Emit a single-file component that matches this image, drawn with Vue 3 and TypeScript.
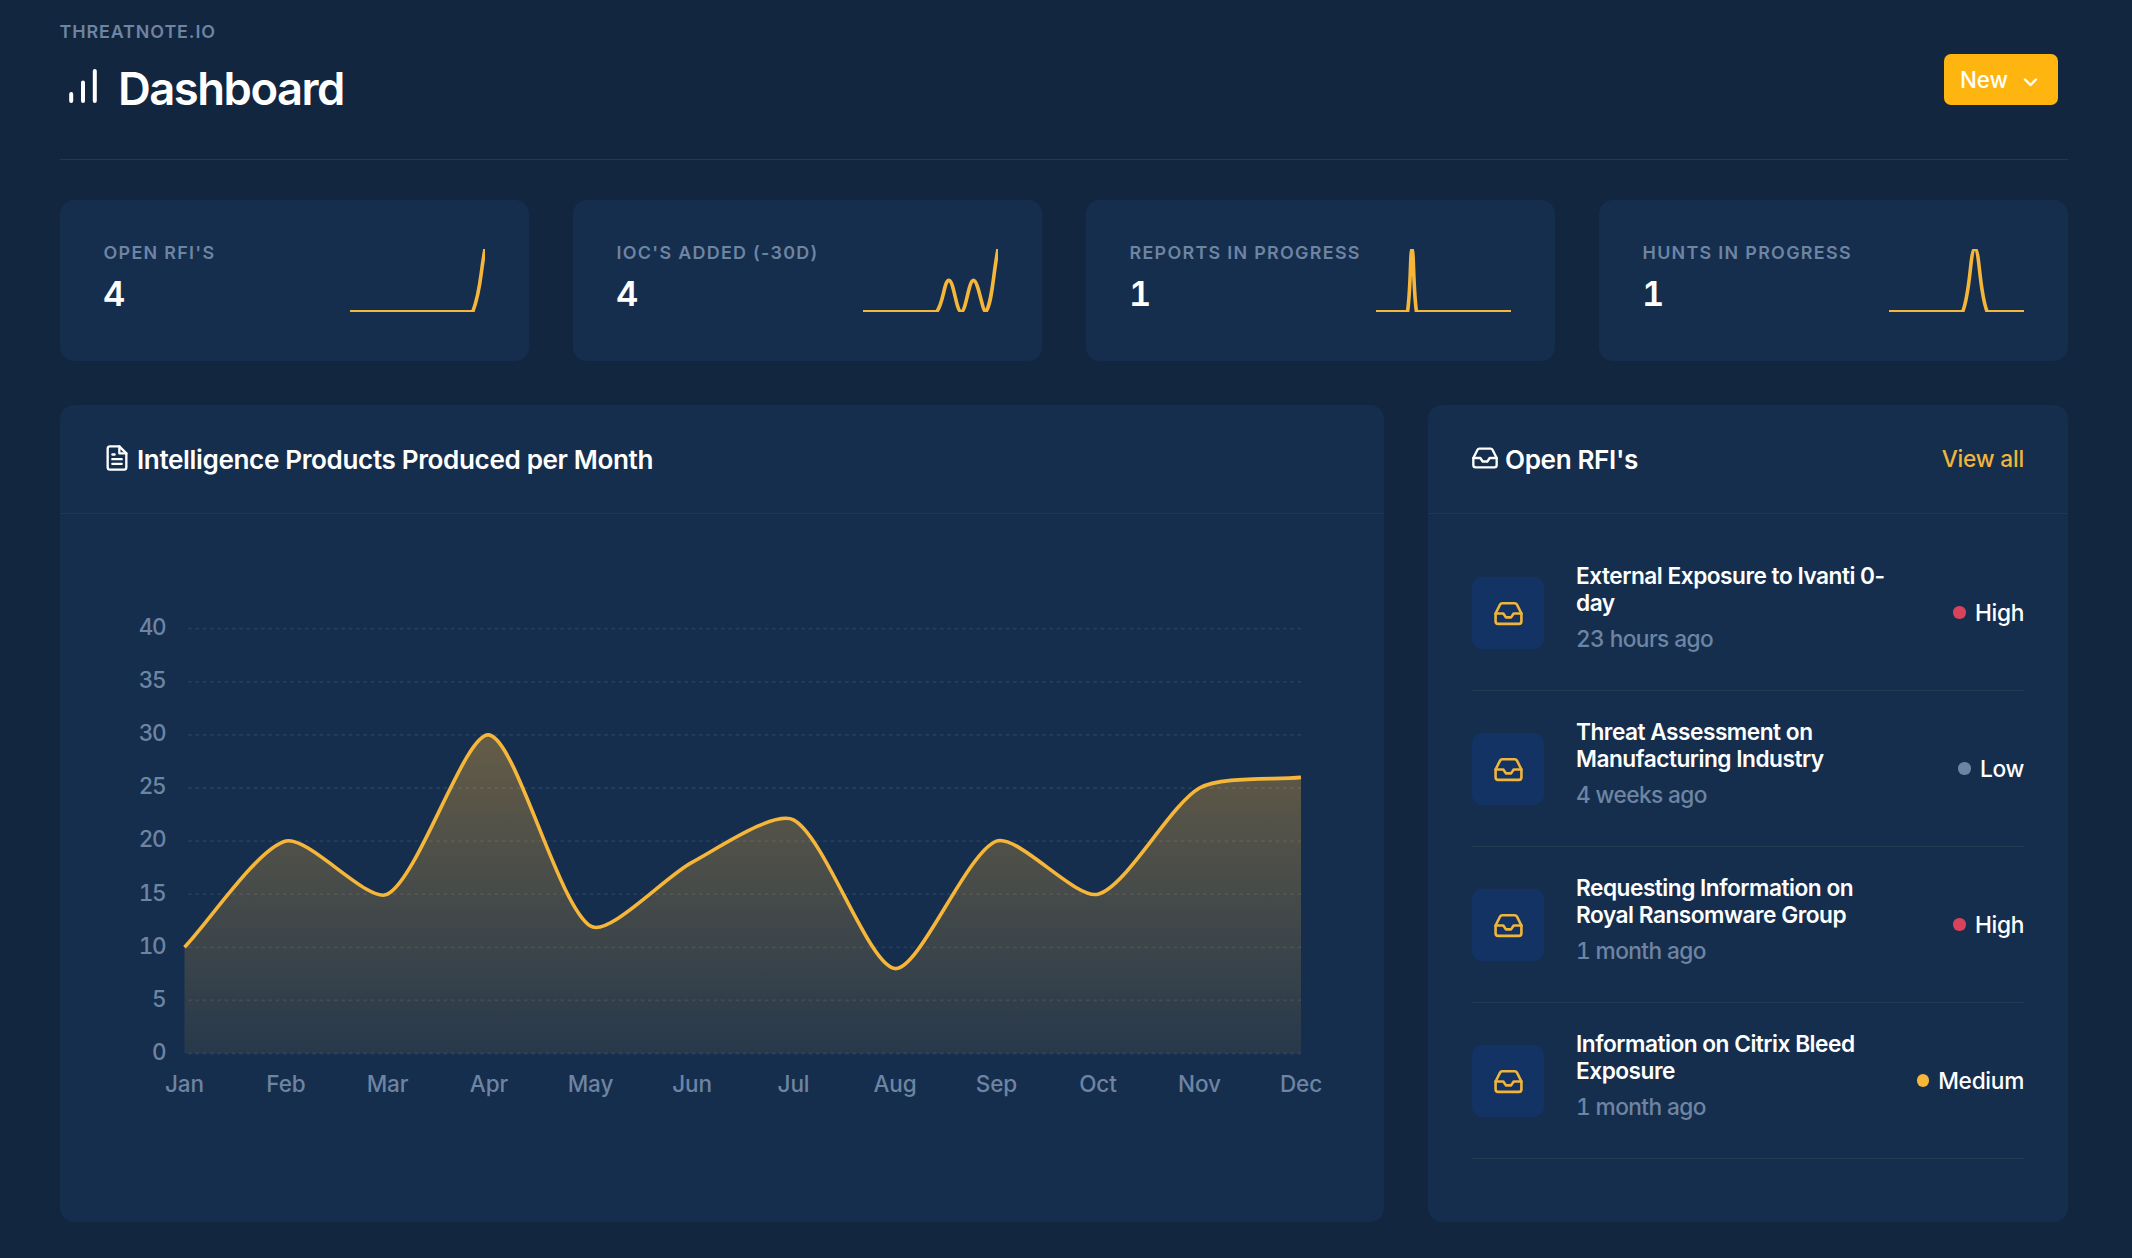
<script setup lang="ts">
interface Point { x: number; y: number }
interface Stat { label: string; value: string; series: number[] }
interface Rfi { title: string; age: string; level: 'High' | 'Low' | 'Medium' }

const peakAt = (length: number, index: number): number[] =>
  Array.from({ length }, (_, i) => (i === index ? 1 : 0))

const stats: Stat[] = [
  { label: "Open RFI's", value: '4', series: peakAt(12, 11) },
  { label: "IOC's added (-30d)", value: '4', series: [0, 0, 0, 0, 0, 0, 0, 1, 0, 1, 0, 2] },
  { label: 'Reports in progress', value: '1', series: peakAt(31, 8) },
  { label: 'Hunts in progress', value: '1', series: peakAt(12, 7) },
]

const rfis: Rfi[] = [
  { title: 'External Exposure to Ivanti 0-\nday', age: '23 hours ago', level: 'High' },
  { title: 'Threat Assessment on\nManufacturing Industry', age: '4 weeks ago', level: 'Low' },
  { title: 'Requesting Information on\nRoyal Ransomware Group', age: '1 month ago', level: 'High' },
  { title: 'Information on Citrix Bleed\nExposure', age: '1 month ago', level: 'Medium' },
]

/* Smooth curve through the points; control points never leave the plot area. */
function curve(points: Point[], top: number, bottom: number, tension: number): string {
  const clamp = (v: number) => Math.min(bottom, Math.max(top, v))
  const handles = points.map((cur, i) => {
    const prev = points[i - 1] ?? cur
    const next = points[i + 1] ?? cur
    const d0 = Math.hypot(cur.x - prev.x, cur.y - prev.y)
    const d1 = Math.hypot(next.x - cur.x, next.y - cur.y)
    const a = (tension * d0) / (d0 + d1)
    const b = (tension * d1) / (d0 + d1)
    return {
      inX: cur.x - a * (next.x - prev.x),
      inY: clamp(cur.y - a * (next.y - prev.y)),
      outX: cur.x + b * (next.x - prev.x),
      outY: clamp(cur.y + b * (next.y - prev.y)),
    }
  })
  return points.reduce((d, p, i) => {
    if (i === 0) return `M${p.x} ${p.y}`
    const from = handles[i - 1]
    const to = handles[i]
    return `${d}C${from.outX} ${from.outY} ${to.inX} ${to.inY} ${p.x} ${p.y}`
  }, '')
}

const sparkW = 135
const sparkH = 63.3
function sparkline(series: number[]): string {
  const max = Math.max(...series)
  const step = sparkW / (series.length - 1)
  const pts = series.map((v, i) => ({ x: i * step, y: sparkH - 0.5 - (v / max) * (sparkH - 0.5) }))
  return curve(pts, 0, sparkH - 0.5, 0.4)
}

const months = ['Jan', 'Feb', 'Mar', 'Apr', 'May', 'Jun', 'Jul', 'Aug', 'Sep', 'Oct', 'Nov', 'Dec']
const produced = [10, 20, 15, 30, 12, 18, 22, 8, 20, 15, 25, 26]
const ticks = [0, 5, 10, 15, 20, 25, 30, 35, 40]
const plot = { left: 124.5, right: 1241, top: 114.7, bottom: 539.5 }
const xAt = (i: number) => plot.left + (i * (plot.right - plot.left)) / (months.length - 1)
const yAt = (v: number) => plot.bottom - (v / 40) * (plot.bottom - plot.top)
const line = curve(produced.map((v, i) => ({ x: xAt(i), y: yAt(v) })), plot.top, plot.bottom, 0.25)
const area = `${line}L${plot.right} ${plot.bottom}L${plot.left} ${plot.bottom}Z`
</script>

<template>
  <main class="page">
    <header class="header">
      <div>
        <div class="eyebrow">Threatnote.io</div>
        <div class="heading">
          <svg class="bars" width="46" height="50" viewBox="0 0 46 50" fill="none" stroke="#fff" stroke-width="4" stroke-linecap="round">
            <path d="M11.2 37V30M23 37V18.500M34.800 37V7" />
          </svg>
          <h1>Dashboard</h1>
        </div>
      </div>
      <button class="new" type="button">
        <span>New</span>
        <svg width="15" height="9" viewBox="0 0 15 9" fill="none" stroke="#fff" stroke-width="2.400" stroke-linecap="round" stroke-linejoin="round">
          <path d="M2 1.500L7.500 7L13 1.500" />
        </svg>
      </button>
    </header>

    <section class="stats">
      <article v-for="s in stats" :key="s.label" class="card stat">
        <div>
          <div class="label">{{ s.label }}</div>
          <div class="value">{{ s.value }}</div>
        </div>
        <svg class="spark" :width="sparkW" :height="sparkH" :viewBox="`0 0 ${sparkW} ${sparkH}`">
          <path :d="sparkline(s.series)" fill="none" stroke="#f6b63a" stroke-width="3.600" />
        </svg>
      </article>
    </section>

    <section class="panels">
      <article class="card products">
        <div class="card-head">
          <svg class="icon" width="28" height="28" viewBox="0 0 24 24">
            <path d="M14 2H6a2 2 0 0 0-2 2v16a2 2 0 0 0 2 2h12a2 2 0 0 0 2-2V8z" />
            <path d="M14 2v6h6M16 13H8M16 17H8M10 9H8" />
          </svg>
          <h2>Intelligence Products Produced per Month</h2>
        </div>
        <svg class="chart" width="1324" height="708" viewBox="0 0 1324 708">
          <defs>
            <linearGradient id="fade" gradientUnits="userSpaceOnUse" x1="0" x2="0" :y1="plot.top" :y2="plot.bottom">
              <stop offset="0" stop-color="#fdb53a" stop-opacity="0.43" />
              <stop offset="1" stop-color="#fdb53a" stop-opacity="0.08" />
            </linearGradient>
          </defs>
          <g class="grid">
            <line v-for="t in ticks" :key="t" :x1="plot.left + 3.600" :x2="plot.right" :y1="yAt(t)" :y2="yAt(t)" />
          </g>
          <path :d="area" fill="url(#fade)" />
          <path :d="line" fill="none" stroke="#f6b63a" stroke-width="3.600" />
          <g class="axis">
            <text v-for="t in ticks" :key="t" class="num" x="105.500" :y="yAt(t) + 6.300" text-anchor="end">{{ t }}</text>
            <text v-for="(m, i) in months" :key="m" :x="xAt(i)" y="578" text-anchor="middle">{{ m }}</text>
          </g>
        </svg>
      </article>

      <article class="card rfis">
        <div class="card-head">
          <svg class="icon" width="28" height="28" viewBox="0 0 24 24">
            <path d="M22 12h-6l-2 3h-4l-2-3H2" />
            <path d="M5.450 5.110L2 12v6a2 2 0 0 0 2 2h16a2 2 0 0 0 2-2v-6l-3.450-6.890A2 2 0 0 0 16.760 4H7.240a2 2 0 0 0-1.790 1.110z" />
          </svg>
          <h2>Open RFI's</h2>
          <a class="all">View all</a>
        </div>
        <ul class="list">
          <li v-for="r in rfis" :key="r.title" class="row">
            <span class="avatar">
              <svg class="icon" width="31" height="31" viewBox="0 0 24 24">
                <path d="M22 12h-6l-2 3h-4l-2-3H2" />
                <path d="M5.450 5.110L2 12v6a2 2 0 0 0 2 2h16a2 2 0 0 0 2-2v-6l-3.450-6.890A2 2 0 0 0 16.760 4H7.240a2 2 0 0 0-1.790 1.110z" />
              </svg>
            </span>
            <div class="info">
              <div class="title">{{ r.title }}</div>
              <div class="age">{{ r.age }}</div>
            </div>
            <span class="level"><i :class="r.level.toLowerCase()"></i>{{ r.level }}</span>
          </li>
        </ul>
      </article>
    </section>
  </main>
</template>

<style>
body { background: #12263f; }
</style>

<style scoped>
.page {
  box-sizing: border-box;
  min-height: 1258px;
  padding: 0 64px 36px 60px;
  background: #12263f;
  color: #fff;
  font-family: Inter, "Liberation Sans", sans-serif;
}
.header {
  display: flex;
  justify-content: space-between;
  align-items: flex-start;
  box-sizing: border-box;
  height: 160px;
  margin-bottom: 40px;
  padding: 20.5px 10px 0 0;
  border-bottom: 1px solid #24384f;
}
.eyebrow, .label {
  font-size: 17.9px;
  line-height: 22px;
  font-weight: 600;
  letter-spacing: 1.3px;
  text-transform: uppercase;
  color: #6e84a3;
}
.eyebrow { margin-left: -0.5px; letter-spacing: 0.9px; }
.heading { display: flex; margin-top: 21px; }
.bars { margin-right: 12px; }
h1 {
  margin: 0;
  font-size: 45.4px;
  line-height: 50px;
  font-weight: 600;
  letter-spacing: -1.5px;
}
.new {
  display: flex;
  align-items: center;
  justify-content: space-between;
  width: 114px;
  height: 51px;
  margin-top: 33.5px;
  padding: 0 20px 0 16px;
  border: 0;
  border-radius: 7px;
  background: #ffb510;
  color: #fff;
  font: 500 22.3px/50px Inter, "Liberation Sans", sans-serif;
  letter-spacing: -0.1px;
}
.new svg { margin-top: 5px; }
.card { border-radius: 14px; background: #152e4d; }
.stats { display: grid; grid-template-columns: repeat(4, 1fr); gap: 44px; }
.stat {
  display: flex;
  justify-content: space-between;
  align-items: flex-start;
  box-sizing: border-box;
  height: 161px;
  padding: 41.5px 44px 0;
}
.label { margin-left: -0.5px; white-space: nowrap; }
.value {
  margin: 10px 0 0 -1px;
  font-size: 34.5px;
  line-height: 40px;
  font-weight: 600;
  font-variant-numeric: tabular-nums;
}
.spark { flex: none; margin: 7.5px 0 0 -20px; overflow: hidden; }
.panels {
  display: grid;
  grid-template-columns: 1324px 640px;
  gap: 44px;
  margin-top: 44px;
}
.products, .rfis { height: 817px; }
.card-head {
  display: flex;
  align-items: center;
  box-sizing: border-box;
  height: 109px;
  padding: 0 44px;
  border-bottom: 1px solid #1f3853;
}
.icon {
  flex: none;
  fill: none;
  stroke: currentColor;
  stroke-width: 2;
  stroke-linecap: round;
  stroke-linejoin: round;
}
.card-head .icon { margin: 0 6px 3px -1px; }
h2 { margin: 1px 0 0; font-size: 26.1px; line-height: 32px; font-weight: 600; letter-spacing: -0.37px; }
.all { margin: 0 0 2px auto; font-size: 22.7px; font-weight: 500; letter-spacing: -0.2px; color: #f0b53c; }
.chart { display: block; }
.grid line { stroke: #2c4360; stroke-opacity: 0.75; stroke-width: 1.800; stroke-dasharray: 3.65 3.65; }
.axis text { fill: #6e84a3; font-size: 22.5px; font-weight: 500; letter-spacing: -0.1px; }
.axis .num { letter-spacing: -1.200px; font-variant-numeric: tabular-nums; }
.list { margin: 0; padding: 20.5px 44px 0; list-style: none; }
.row {
  display: flex;
  align-items: center;
  box-sizing: border-box;
  height: 156px;
  padding-top: 2px;
  border-bottom: 1px solid #243a53;
}
.avatar {
  display: flex;
  flex: none;
  align-items: center;
  justify-content: center;
  width: 72px;
  height: 72px;
  border-radius: 10px;
  background: #133364;
  color: #f0b53c;
}
.info { padding: 0 0 4px 32px; }
.title {
  white-space: pre-line;
  font-size: 22.7px;
  line-height: 26.3px;
  font-weight: 600;
  letter-spacing: -0.5px;
}
.age {
  margin-top: 2px;
  font-size: 22.7px;
  line-height: 41px;
  font-weight: 450;
  letter-spacing: -0.6px;
  font-variant-numeric: tabular-nums;
  color: #6e84a3;
}
.level {
  display: flex;
  align-items: center;
  margin: 0 0 1px auto;
  font-size: 22.7px;
  font-weight: 500;
  letter-spacing: -0.3px;
}
.level i { width: 12.500px; height: 12.500px; margin-right: 9px; border-radius: 50%; }
.high { background: #d8435b; }
.low { background: #6e84a3; }
.medium { background: #f6b63a; }
</style>
